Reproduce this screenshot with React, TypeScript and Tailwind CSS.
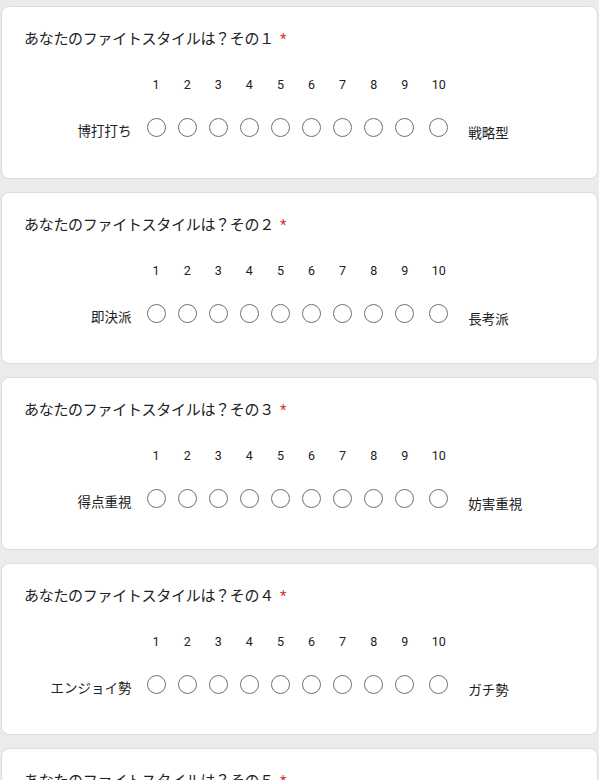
import React from "react";

const questions = [
  { n: "１", left: "博打打ち", right: "戦略型" },
  { n: "２", left: "即決派", right: "長考派" },
  { n: "３", left: "得点重視", right: "妨害重視" },
  { n: "４", left: "エンジョイ勢", right: "ガチ勢" },
  { n: "５", left: "", right: "" },
];

const nums = [1, 2, 3, 4, 5, 6, 7, 8, 9, 10];

function Card({ q }: { q: (typeof questions)[number] }) {
  return (
    <div className="h-[172.5px] shrink-0 rounded-[8px] border border-[#dadce0] bg-white pl-[22px] pt-[21px]">
      <div className="text-[15px] leading-[22px] text-[#202124] tracking-[-0.3px]">
        あなたのファイトスタイルは？その{q.n}
        <span className="ml-[6px] text-[#d93025]">*</span>
      </div>
      <div className="-ml-[22px] mt-[26px] flex">
        <div className="w-[138.5px] shrink-0" />
        {nums.map((n) => (
          <div
            key={n}
            className={`${n === 10 ? "w-[37px]" : "w-[31.1px]"} shrink-0 text-center text-[12.5px] leading-[18px] text-[#202124]`}
          >
            {n}
          </div>
        ))}
      </div>
      <div className="-ml-[22px] mt-[24px] flex items-start">
        <div className="w-[138.5px] shrink-0 pr-[9px] pt-[3px] text-right text-[13.5px] leading-[20px] text-[#202124]">
          {q.left}
        </div>
        {nums.map((n) => (
          <div
            key={n}
            className={`${n === 10 ? "w-[37px]" : "w-[31.1px]"} flex shrink-0 justify-center`}
          >
            <div className="h-[19px] w-[19px] rounded-full border border-[#6f6f6f]" />
          </div>
        ))}
        <div className="pl-[11px] pt-[5px] text-[13.5px] leading-[20px] text-[#202124]">
          {q.right}
        </div>
      </div>
    </div>
  );
}

export default function App() {
  return (
    <div
      className="h-[780px] overflow-hidden bg-[#ebebeb] px-[1px] pt-[6px]"
      style={{ fontFamily: 'Roboto, "Noto Sans CJK JP", sans-serif' }}
    >
      <div className="flex flex-col gap-[13px]">
        {questions.map((q) => (
          <Card key={q.n} q={q} />
        ))}
      </div>
    </div>
  );
}
